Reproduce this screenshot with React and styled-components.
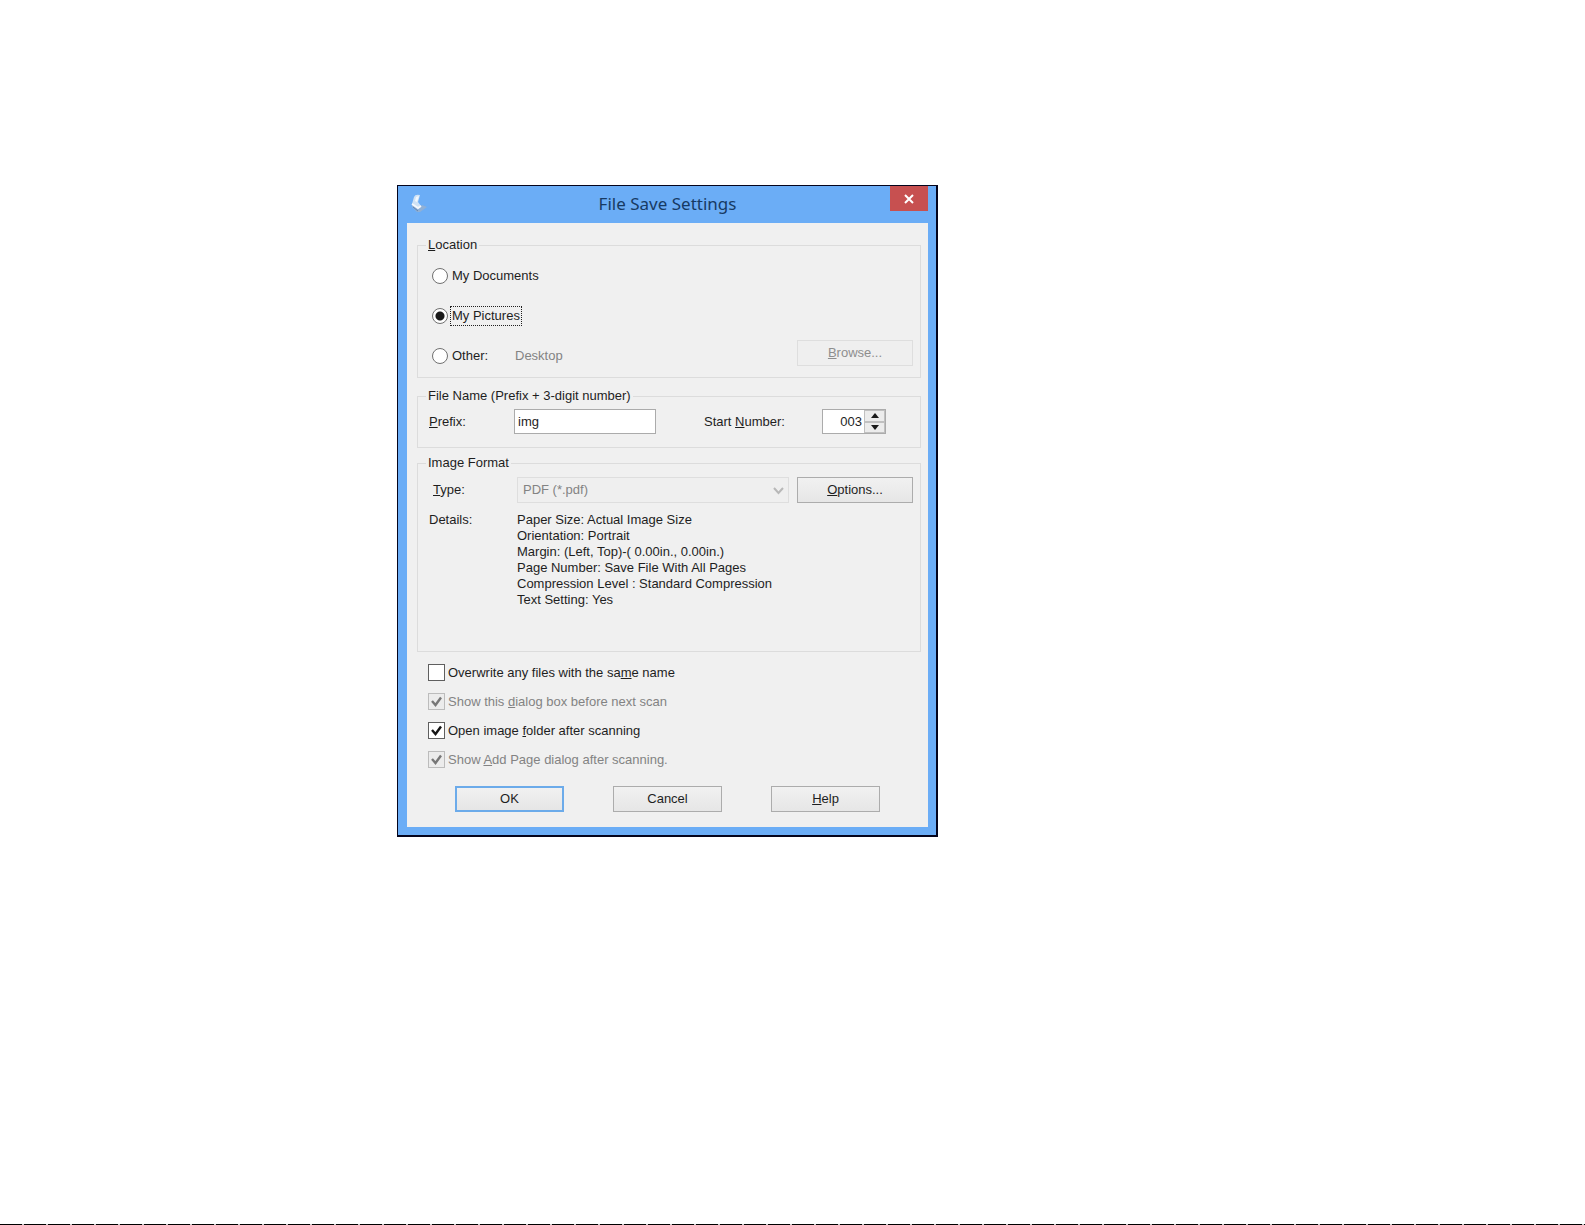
import React, { useState } from 'react'
import styled, { createGlobalStyle } from 'styled-components';

const GlobalStyle = createGlobalStyle`
    *{
        box-sizing:border-box;
    }
    body{
        margin:0;
        background-color:#ffffff;
    }
    body, button, input, select{
        font-family:"Liberation Sans", Arial, sans-serif;
        font-size:13px;
        line-height:16px;
        color:#1e1e1e;
    }
`;

const Page = styled.div`
    min-height:100vh;
    display:flex;
    flex-direction:column;
    justify-content:space-between;
`;

const PageBody = styled.main`
    padding:185px 16px 16px 397px;

    @media(max-width:960px){
        padding:16px;
    }
`;

const PageEdge = styled.div`
    height:1px;
    background:repeating-linear-gradient(90deg, #000000 0 22px, #c8c8c8 22px 24px);
`;

const Window = styled.section`
    width:100%;
    max-width:541px;
    border:1px solid #04041c;
    border-width:1px 2px 2px 1px;
    background-color:#6badf6;
    padding:0 8px 8px 9px;
`;

const TitleBar = styled.header`
    height:37px;
    padding-bottom:2px;
    display:grid;
    grid-template-columns:38px 1fr 38px;
    align-items:center;
`;

const Title = styled.h1`
    margin:0;
    font-family:"Noto Sans", "Open Sans", sans-serif;
    font-size:17px;
    line-height:24px;
    font-weight:400;
    text-align:center;
    color:#173a63;
`;

const TitleIcon = styled.svg`
    margin-left:3px;
`;

const CloseButton = styled.button`
    height:25px;
    align-self:start;
    display:flex;
    justify-content:center;
    align-items:center;
    padding:0;
    border:none;
    background-color:#c75050;
`;

const Client = styled.form`
    padding:14px 7px 15px 10px;
    background-color:#f0f0f0;
`;

const Group = styled.fieldset`
    min-width:0;
    margin:0 0 ${props=>props.$gap}px;
    padding:${props=>props.$top}px 7px ${props=>props.$bottom}px 11px;
    border:1px solid #dcdcdc;
`;

const GroupTitle = styled.legend`
    padding:0 2px;
    margin-left:-3px;
`;

const LocationRow = styled.div`
    height:40px;
    padding:4px 0;
    display:flex;
    align-items:center;
`;

const Choice = styled.label`
    display:flex;
    align-items:center;
    gap:${props=>props.$gap}px;
    min-width:${props=>props.$width}px;
    color:${props=>props.$disabled?'#838383':'inherit'};
`;

const Radio = styled.input`
    appearance:none;
    width:16px;
    height:16px;
    margin:0 0 0 3px;
    border:1px solid #707070;
    border-radius:50%;
    background-color:#ffffff;

    &:checked{
        background-image:radial-gradient(circle, #1a1a1a 4px, #ffffff 5px);
    }
`;

const ChoiceText = styled.span`
    padding:1px;
    border:1px ${props=>props.$focused?'dotted #202020':'solid transparent'};
`;

const Muted = styled.span`
    flex:1;
    color:#838383;
`;

const Button = styled.button`
    width:${props=>props.$width}px;
    height:26px;
    padding:0;
    border:${props=>props.$primary?'2px solid #6cabea':'1px solid #acacac'};
    background:linear-gradient(#f1f1f1, #e6e6e6);

    &:disabled{
        border-color:#dedede;
        background:#efefef;
        color:#8e8e8e;
    }
`;

const BrowseButton = styled(Button)`
    align-self:flex-start;
`;

const NameRow = styled.div`
    display:grid;
    grid-template-columns:85px 142px 1fr 118px 91px;
    align-items:center;
`;

const TextBox = styled.input`
    width:100%;
    height:25px;
    padding:0 3px;
    border:1px solid #ababab;
    background-color:#ffffff;
`;

const StartLabel = styled.label`
    grid-column:4;
`;

const Spinner = styled.div`
    width:64px;
    height:25px;
    display:flex;
    border:1px solid #ababab;
    background-color:#ffffff;
`;

const SpinnerInput = styled.input`
    flex:1;
    min-width:0;
    padding:0 2px;
    border:none;
    background:none;
    text-align:right;
`;

const SpinnerButtons = styled.div`
    width:21px;
    display:grid;
    grid-template-rows:1fr 1fr;
`;

const SpinnerButton = styled.button`
    display:flex;
    justify-content:center;
    align-items:center;
    padding:0;
    border:1px solid #c0c0c0;
    background-color:#ececec;
`;

const FormatGrid = styled.div`
    display:grid;
    grid-template-columns:88px 1fr 116px;
    row-gap:9px;
    align-items:center;
`;

const TypeLabel = styled.label`
    padding-left:4px;
`;

const SelectWrapper = styled.div`
    position:relative;
    margin-right:8px;
`;

const Select = styled.select`
    appearance:none;
    width:100%;
    height:26px;
    padding:0 5px;
    border:1px solid #dedede;
    border-radius:0;
    background-color:#efefef;

    &:disabled{
        color:#838383;
        opacity:1;
    }
`;

const SelectArrow = styled.svg`
    position:absolute;
    right:5px;
    top:10px;
    pointer-events:none;
`;

const DetailsTitle = styled.div`
    align-self:start;
`;

const DetailsList = styled.ul`
    grid-column:2 / 4;
    margin:0;
    padding:0;
    list-style:none;
`;

const Options = styled.div`
    display:grid;
    row-gap:12px;
    padding-left:11px;
`;

const CheckMark = styled.span`
    position:relative;
    width:17px;
    height:17px;
`;

const CheckInput = styled.input`
    appearance:none;
    display:block;
    width:17px;
    height:17px;
    margin:0;
    border:1px solid #5f5f5f;
    background-color:#ffffff;

    &:disabled{
        border-color:#bcbcbc;
        background-color:#ececec;
    }
`;

const Tick = styled.svg`
    position:absolute;
    left:0;
    top:0;
    pointer-events:none;
`;

const Actions = styled.div`
    display:flex;
    justify-content:space-between;
    padding:18px 41px 0 38px;
`;

const DETAILS = [
    'Paper Size: Actual Image Size',
    'Orientation: Portrait',
    'Margin: (Left, Top)-( 0.00in., 0.00in.)',
    'Page Number: Save File With All Pages',
    'Compression Level : Standard Compression',
    'Text Setting: Yes',
]

const OPTION_LIST = [
    {id:'overwrite',label:<>Overwrite any files with the sa<u>m</u>e name</>,checked:false,disabled:false},
    {id:'showDialog',label:<>Show this <u>d</u>ialog box before next scan</>,checked:true,disabled:true},
    {id:'openFolder',label:<>Open image <u>f</u>older after scanning</>,checked:true,disabled:false},
    {id:'addPage',label:<>Show <u>A</u>dd Page dialog after scanning.</>,checked:true,disabled:true},
]

const ScannerIcon = () => (
    <TitleIcon width="20" height="22" viewBox="0 0 20 22" aria-hidden="true">
        <path d="M4 4 Q5 1 10 2 L8 9 L11 13 L8 15 L2 11 Z" fill="#cfe2f5"/>
        <path d="M6 4 L9 3 L7 9 L5 8 Z" fill="#f2f8fd"/>
        <path d="M2 11 L8 15 L12 12 L17 14 L10 19 L7 19 L2 14 Z" fill="#8fb0d6"/>
        <path d="M2 11 L8 15 L11 13" fill="none" stroke="#f4f8fc" strokeWidth="2"/>
        <path d="M3 14 L8 18" fill="none" stroke="#6285b3" strokeWidth="1"/>
    </TitleIcon>
)

const CheckOption = ({option}) => {
    const [checked,setChecked] = useState(option.checked);
    return(
        <Choice $gap={3} $disabled={option.disabled}>
            <CheckMark>
                <CheckInput type="checkbox" checked={checked} disabled={option.disabled} onChange={()=>setChecked(!checked)}/>
                {checked && (
                    <Tick width="17" height="17" viewBox="0 0 17 17">
                        <path d="M4 8 L7.5 12 L13 4.5" fill="none" stroke={option.disabled?'#777777':'#151515'} strokeWidth="2.4"/>
                    </Tick>
                )}
            </CheckMark>
            <span>{option.label}</span>
        </Choice>
    );
}

const App = () => {
    const [location,setLocation] = useState('pictures');
    const [prefix,setPrefix] = useState('img');
    const [start,setStart] = useState(3);

    const radioProps = (value) => ({
        type:'radio',
        name:'location',
        checked:location===value,
        onChange:()=>setLocation(value),
    });

    return(
        <>
            <GlobalStyle/>
            <Page>
                <PageBody>
                    <Window>
                        <TitleBar>
                            <ScannerIcon/>
                            <Title>File Save Settings</Title>
                            <CloseButton type="button" aria-label="Close">
                                <svg width="12" height="12" viewBox="0 0 12 12">
                                    <path d="M2 2 L10 10 M10 2 L2 10" stroke="#ffffff" strokeWidth="2"/>
                                </svg>
                            </CloseButton>
                        </TitleBar>
                        <Client onSubmit={(e)=>e.preventDefault()}>
                            <Group $gap={10} $top={3} $bottom={1}>
                                <GroupTitle><u>L</u>ocation</GroupTitle>
                                <LocationRow>
                                    <Choice $gap={2}>
                                        <Radio {...radioProps('documents')}/>
                                        <ChoiceText>My Documents</ChoiceText>
                                    </Choice>
                                </LocationRow>
                                <LocationRow>
                                    <Choice $gap={2}>
                                        <Radio {...radioProps('pictures')}/>
                                        <ChoiceText $focused>My Pictures</ChoiceText>
                                    </Choice>
                                </LocationRow>
                                <LocationRow>
                                    <Choice $gap={2} $width={86}>
                                        <Radio {...radioProps('other')}/>
                                        <ChoiceText>Other:</ChoiceText>
                                    </Choice>
                                    <Muted>Desktop</Muted>
                                    <BrowseButton type="button" $width={116} disabled><span><u>B</u>rowse...</span></BrowseButton>
                                </LocationRow>
                            </Group>
                            <Group $gap={7} $top={5} $bottom={13}>
                                <GroupTitle>File Name (Prefix + 3-digit number)</GroupTitle>
                                <NameRow>
                                    <label htmlFor="prefix"><u>P</u>refix:</label>
                                    <TextBox id="prefix" value={prefix} onChange={(e)=>setPrefix(e.target.value)}/>
                                    <StartLabel htmlFor="start">Start <u>N</u>umber:</StartLabel>
                                    <Spinner>
                                        <SpinnerInput id="start" value={String(start).padStart(3,'0')} onChange={(e)=>setStart(Number(e.target.value)||0)}/>
                                        <SpinnerButtons>
                                            <SpinnerButton type="button" aria-label="Increase" onClick={()=>setStart(start+1)}>
                                                <svg width="8" height="5" viewBox="0 0 8 5"><path d="M0 5 L4 0 L8 5 Z" fill="#1a1a1a"/></svg>
                                            </SpinnerButton>
                                            <SpinnerButton type="button" aria-label="Decrease" onClick={()=>setStart(Math.max(0,start-1))}>
                                                <svg width="8" height="5" viewBox="0 0 8 5"><path d="M0 0 L4 5 L8 0 Z" fill="#1a1a1a"/></svg>
                                            </SpinnerButton>
                                        </SpinnerButtons>
                                    </Spinner>
                                </NameRow>
                            </Group>
                            <Group $gap={12} $top={6} $bottom={43}>
                                <GroupTitle>Image Format</GroupTitle>
                                <FormatGrid>
                                    <TypeLabel htmlFor="type"><u>T</u>ype:</TypeLabel>
                                    <SelectWrapper>
                                        <Select id="type" disabled defaultValue="pdf">
                                            <option value="pdf">PDF (*.pdf)</option>
                                        </Select>
                                        <SelectArrow width="11" height="8" viewBox="0 0 11 8">
                                            <path d="M1 1 L5.5 6 L10 1" fill="none" stroke="#b8b8b8" strokeWidth="2"/>
                                        </SelectArrow>
                                    </SelectWrapper>
                                    <Button type="button" $width={116}><u>O</u>ptions...</Button>
                                    <DetailsTitle>Details:</DetailsTitle>
                                    <DetailsList>
                                        {DETAILS.map((line)=><li key={line}>{line}</li>)}
                                    </DetailsList>
                                </FormatGrid>
                            </Group>
                            <Options>
                                {OPTION_LIST.map((option)=><CheckOption key={option.id} option={option}/>)}
                            </Options>
                            <Actions>
                                <Button type="submit" $width={109} $primary>OK</Button>
                                <Button type="button" $width={109}>Cancel</Button>
                                <Button type="button" $width={109}><u>H</u>elp</Button>
                            </Actions>
                        </Client>
                    </Window>
                </PageBody>
                <PageEdge/>
            </Page>
        </>
    );
}

export default App;
